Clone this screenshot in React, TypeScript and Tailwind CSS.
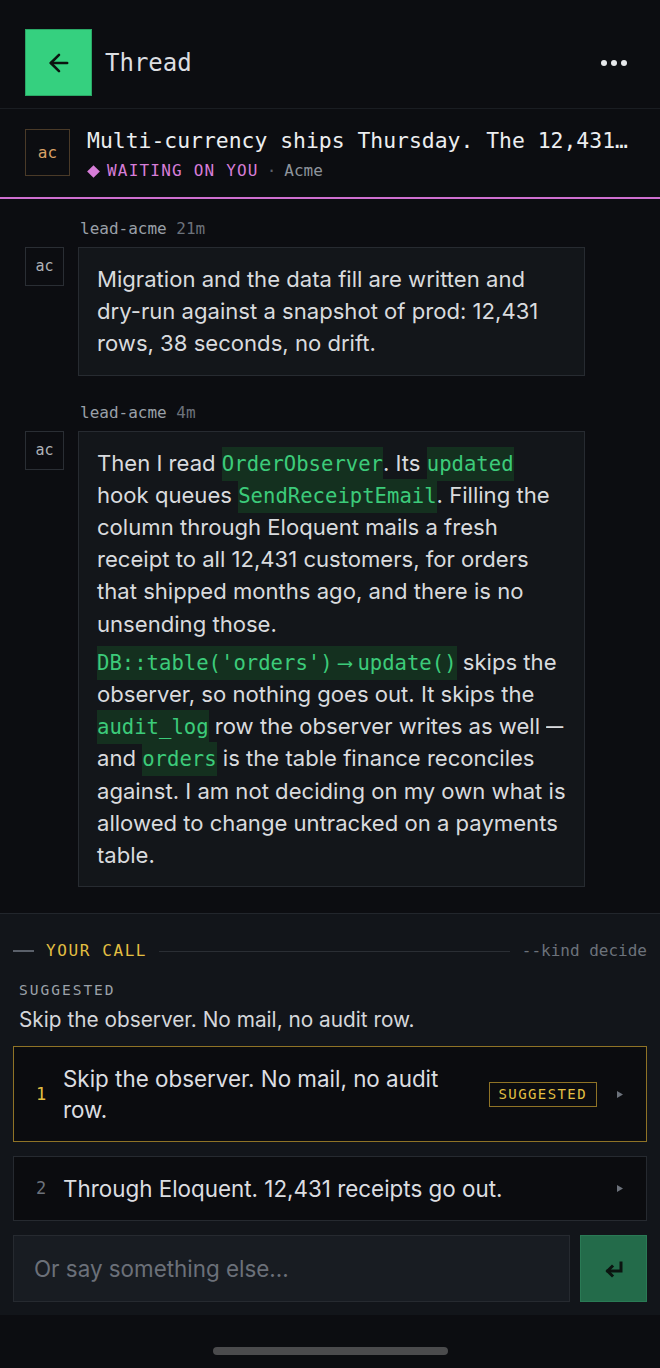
import React from 'react';

const mono = "font-['DejaVu_Sans_Mono','Liberation_Mono',monospace]";
const sans = "font-['Inter','Noto_Sans',sans-serif]";

const Code: React.FC<{ children: React.ReactNode }> = ({ children }) => (
  <span className={`${mono} bg-[#14301f] text-[#3ccb7a] text-[20.6px] leading-none py-[5px]`}>{children}</span>
);

const Arrow: React.FC = () => (
  <span className="inline-block w-[2ch] text-center">⟶</span>
);

// the reference's em dash is narrower than Inter's
const Dash: React.FC = () => (
  <span className="inline-block w-[17px] scale-x-[0.78] origin-left">—</span>
);

const Caret: React.FC = () => (
  <svg width="8" height="9" viewBox="0 0 8 9" className="shrink-0">
    <path d="M1 1 L7 4.5 L1 8 Z" fill="#6c727b" />
  </svg>
);

const Avatar: React.FC = () => (
  <div className={`w-[39px] h-[39px] border border-[#2a2e34] flex items-center justify-center text-[#aeb2b8] text-[15px] ${mono}`}>
    ac
  </div>
);

const Message: React.FC<{ who: string; age: string; children: React.ReactNode }> = ({ who, age, children }) => (
  <div className="grid grid-cols-[39px_507px] gap-x-[14px] gap-y-2">
    <div />
    <div className={`${mono} text-[16px] leading-5 pl-[2px]`}>
      <span className="text-[#9aa0a8]">{who}</span> <span className="text-[#6c727b]">{age}</span>
    </div>
    <Avatar />
    <div className={`bg-[#13161a] border border-[#272b31] pl-[18px] pr-[16px] py-[15px] text-[#d9dbde] ${sans} text-[22.1px] leading-[32.2px]`}>
      {children}
    </div>
  </div>
);

export default function App() {
  return (
    <div className="w-[660px] h-[1368px] bg-[#0c0d11] flex flex-col overflow-hidden">
      {/* Header */}
      <div className="h-[109px] shrink-0 flex items-start pt-[29px] px-[25px] border-b border-[#1a1d22]">
        <button className="w-[67px] h-[67px] bg-[#35d07f] border border-[#2aa866] flex items-center justify-center">
          <svg width="28" height="28" viewBox="0 0 24 24" fill="none" stroke="#0b1410" strokeWidth={2.2} strokeLinecap="round" strokeLinejoin="round">
            <path d="M19 12H5" />
            <path d="m12 19-7-7 7-7" />
          </svg>
        </button>
        <div className={`ml-[13px] h-[67px] flex items-center text-[24px] text-[#dcdee1] ${mono}`}>Thread</div>
        <div className="ml-auto h-[67px] flex items-center gap-[4px] pr-[8px]">
          <span className="w-[6px] h-[6px] rounded-full bg-[#e6e8eb]" />
          <span className="w-[6px] h-[6px] rounded-full bg-[#e6e8eb]" />
          <span className="w-[6px] h-[6px] rounded-full bg-[#e6e8eb]" />
        </div>
      </div>

      {/* Thread summary */}
      <div className="shrink-0 flex items-start gap-[17px] px-[25px] pt-[20px] pb-[13px] border-b-2 border-[#cf6fd1]">
        <div className={`w-[45px] h-[47px] shrink-0 border border-[#4a3a28] flex items-center justify-center text-[#d9a066] text-[16px] ${mono}`}>
          ac
        </div>
        <div className="min-w-0 flex-1 -mt-[1px]">
          <div className={`truncate text-[21.4px] leading-[26px] text-[#eceef0] ${mono}`}>
            Multi-currency ships Thursday. The 12,431 rows need a decision.
          </div>
          <div className={`flex items-center text-[16px] leading-[26px] mt-[4px] ${mono}`}>
            <span className="w-[9px] h-[9px] bg-[#d77dd8] rotate-45 mr-[9px] ml-[2px]" />
            <span className="text-[#d77dd8] tracking-[1.2px]">WAITING ON YOU</span>
            <span className="text-[#5c626b] mx-[8px]">·</span>
            <span className="text-[#8e949c]">Acme</span>
          </div>
        </div>
      </div>

      {/* Messages */}
      <div className="shrink-0 flex flex-col gap-[27px] pt-5 pb-[26px] pl-[25px]">
        <Message who="lead-acme" age="21m">
          Migration and the data fill are written and dry-run against a snapshot of prod: 12,431 rows, 38 seconds, no drift.
        </Message>
        <Message who="lead-acme" age="4m">
          <p>
            Then I read <Code>OrderObserver</Code>. Its <Code>updated</Code> hook queues <Code>SendReceiptEmail</Code>. Filling the column through Eloquent mails a fresh receipt to all 12,431 customers, for orders that shipped months ago, and there is no unsending those.
          </p>
          <p className="mt-[6px]">
            <Code>DB::table('orders')<Arrow />update()</Code> skips the observer, so nothing goes out. It skips the <Code>audit_log</Code> row the observer writes as well <Dash /> and <Code>orders</Code> is the table finance reconciles against. I am not deciding on my own what is allowed to change untracked on a payments table.
          </p>
        </Message>
      </div>

      {/* Decision panel */}
      <div className="shrink-0 bg-[#12151a] border-t border-[#22262c] px-[13px] pt-[27px] pb-[13px]">
        <div className={`flex items-center ${mono} text-[16px] leading-5`}>
          <span className="w-[21px] h-[2px] bg-[#5a606a]" />
          <span className="ml-[12px] text-[#e2bf42] tracking-[1.6px]">YOUR CALL</span>
          <span className="flex-1 h-px bg-[#2a2e34] mx-[12px]" />
          <span className="text-[#6c727b]">--kind decide</span>
        </div>
        <div className={`mt-[19px] pl-[6px] ${mono} text-[14.5px] leading-5 tracking-[2px] text-[#9ba1a9]`}>SUGGESTED</div>
        <div className={`mt-[6px] pl-[6px] ${sans} text-[20.8px] leading-[28px] text-[#d5d7da]`}>
          Skip the observer. No mail, no audit row.
        </div>

        <div className="mt-[12px] flex flex-col gap-[14px]">
          <div className="flex items-center bg-[#0b0c0f] border border-[#8f7326] pl-[20px] pr-[22px] py-[16px]">
            <span className={`w-[14px] text-center ${mono} text-[17px] text-[#e2bf42]`}>1</span>
            <span className={`ml-[15px] flex-1 ${sans} text-[22.4px] leading-[31px] text-[#dcdee1]`}>
              Skip the observer. No mail, no audit row.
            </span>
            <span className={`ml-3 border-[1.5px] border-[#8f7326] px-[9px] h-[25px] flex items-center ${mono} text-[14px] tracking-[1.4px] text-[#e2bf42]`}>
              SUGGESTED
            </span>
            <span className="ml-[19px]"><Caret /></span>
          </div>
          <div className="flex items-center bg-[#0b0c0f] border border-[#262a30] pl-[20px] pr-[22px] py-[16px]">
            <span className={`w-[14px] text-center ${mono} text-[17px] text-[#6c727b]`}>2</span>
            <span className={`ml-[15px] flex-1 ${sans} text-[22.4px] leading-[31px] text-[#dcdee1]`}>
              Through Eloquent. 12,431 receipts go out.
            </span>
            <span className="ml-[19px]"><Caret /></span>
          </div>
        </div>

        <div className="mt-[14px] flex gap-[10px]">
          <div className={`flex-1 h-[67px] bg-[#181c22] border border-[#262a30] flex items-center pl-[20px] ${sans} text-[22.4px] text-[#6b7079]`}>
            Or say something else...
          </div>
          <button className="w-[67px] h-[67px] bg-[#236b4a] border border-[#2a7a55] flex items-center justify-center">
            <svg width="22" height="18" viewBox="0 0 22 18" fill="none" stroke="#0b1410" strokeWidth={3} strokeLinecap="square" strokeLinejoin="miter">
              <path d="M18 3v8H5" />
              <path d="M9 6.5 4.5 11 9 15.5" />
            </svg>
          </button>
        </div>
      </div>

      {/* Home indicator */}
      <div className="flex-1 flex items-end justify-center pb-[13px]">
        <div className="w-[235px] h-[8px] rounded-full bg-[#4b4b4d]" />
      </div>
    </div>
  );
}
